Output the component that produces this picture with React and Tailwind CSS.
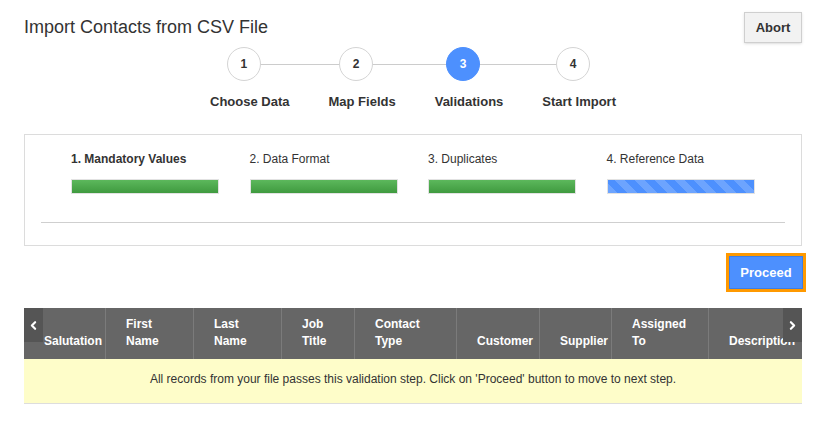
import React from "react";
import { ChevronLeft, ChevronRight } from "lucide-react";

const steps = [
  { n: 1, label: "Choose Data" },
  { n: 2, label: "Map Fields" },
  { n: 3, label: "Validations", active: true },
  { n: 4, label: "Start Import" },
];

const checks = [
  { label: "1. Mandatory Values", bold: true, done: true },
  { label: "2. Data Format", done: true },
  { label: "3. Duplicates", done: true },
  { label: "4. Reference Data", done: false },
];

const columns = [
  { w: "w-[82px]", lines: ["", "Salutation"] },
  { w: "w-[88px]", lines: ["First", "Name"] },
  { w: "w-[88px]", lines: ["Last", "Name"] },
  { w: "w-[73px]", lines: ["Job", "Title"] },
  { w: "w-[102px]", lines: ["Contact", "Type"] },
  { w: "w-[83px]", lines: ["", "Customer"] },
  { w: "w-[72px]", lines: ["", "Supplier"] },
  { w: "w-[97px]", lines: ["Assigned", "To"] },
  { w: "w-[120px]", lines: ["", "Description"] },
];

export default function App() {
  return (
    <div className="w-[816px] h-[438px] bg-white overflow-hidden font-['Liberation_Sans',Arial,sans-serif] text-[#333]">
      <div className="ml-6 w-[778px]">
        {/* Title row */}
        <div className="flex items-start justify-between pt-3">
          <h1 className="text-[18px] leading-[22px] mt-[4px] text-[#333]">
            Import Contacts from CSV File
          </h1>
          <button className="h-[31px] w-[58px] bg-[#f2f2f2] border border-[#cfcfcf] shadow-sm text-[13px] font-bold text-[#333]">
            Abort
          </button>
        </div>

        {/* Stepper */}
        <div className="flex justify-center mt-[4px]">
          <div className="relative flex gap-[39px]">
            <div className="absolute left-[33px] right-[43px] top-[17px] h-px bg-[#cccccc]" />
            {steps.map((s) => (
              <div key={s.n} className="relative flex flex-col items-center">
                <div
                  className={
                    "mr-3 w-[34px] h-[34px] rounded-full flex items-center justify-center text-[12px] font-bold " +
                    (s.active
                      ? "bg-[#4d90fe] text-white border border-[#4d90fe]"
                      : "bg-white text-[#333] border border-[#d4d4d4]")
                  }
                >
                  {s.n}
                </div>
                <div className="mt-[13px] text-[13px] leading-[16px] font-bold text-[#333] whitespace-nowrap">
                  {s.label}
                </div>
              </div>
            ))}
          </div>
        </div>

        {/* Validation panel */}
        <div className="mt-[24px] h-[112px] border border-[#dcdcdc] px-4 pt-[17px]">
          <div className="flex pl-[30px]">
            {checks.map((c) => (
              <div key={c.label} className="w-[179px]">
                <div
                  className={
                    "text-[12px] leading-[15px] text-[#333] " + (c.bold ? "font-bold" : "")
                  }
                >
                  {c.label}
                </div>
                <div
                  className={
                    "mt-[12px] w-[148px] h-[15px] border border-[#e2e2e2] " +
                    (c.done
                      ? "bg-gradient-to-b from-[#5cb85c] to-[#3f9a3f]"
                      : "bg-[#4d90fe] bg-[repeating-linear-gradient(45deg,rgba(255,255,255,0.18)_0px,rgba(255,255,255,0.18)_7px,transparent_7px,transparent_14px)]")
                  }
                />
              </div>
            ))}
          </div>
          <div className="mt-[28px] h-px bg-[#cfcfcf]" />
        </div>

        {/* Proceed */}
        <div className="flex justify-end mt-[7px] -mr-1">
          <div className="border-[3px] border-[#ff9900]">
            <button className="h-[33px] w-[74px] bg-[#4d90fe] border border-[#3b7ee8] text-white text-[13px] font-bold">
              Proceed
            </button>
          </div>
        </div>

        {/* Table */}
        <div className="relative mt-[16px] overflow-hidden">
          <div className="flex h-[51px] bg-[#666666]">
            {columns.map((c, i) => (
              <div
                key={i}
                className={
                  c.w +
                  " shrink-0 flex flex-col justify-end pl-5 pb-[9px] text-white text-[12px] font-bold leading-[17px] whitespace-nowrap " +
                  (i < columns.length - 1 ? "border-r border-[#7b7b7b]" : "")
                }
              >
                <span>{c.lines[0] || "\u00a0"}</span>
                <span>{c.lines[1]}</span>
              </div>
            ))}
          </div>
          <div className="absolute left-0 top-0 w-[19px] h-[34px] bg-[#555555] flex items-center justify-center">
            <ChevronLeft size={13} strokeWidth={4} className="text-white" />
          </div>
          <div className="absolute right-0 top-0 w-[19px] h-[34px] bg-[#555555] flex items-center justify-center">
            <ChevronRight size={13} strokeWidth={4} className="text-white" />
          </div>
          <div className="h-[45px] pb-[4px] bg-[#fefdc9] border-b border-[#dddddd] flex items-center justify-center text-[12px] text-[#333]">
            All records from your file passes this validation step. Click on 'Proceed' button to move to next step.
          </div>
        </div>
      </div>
    </div>
  );
}
